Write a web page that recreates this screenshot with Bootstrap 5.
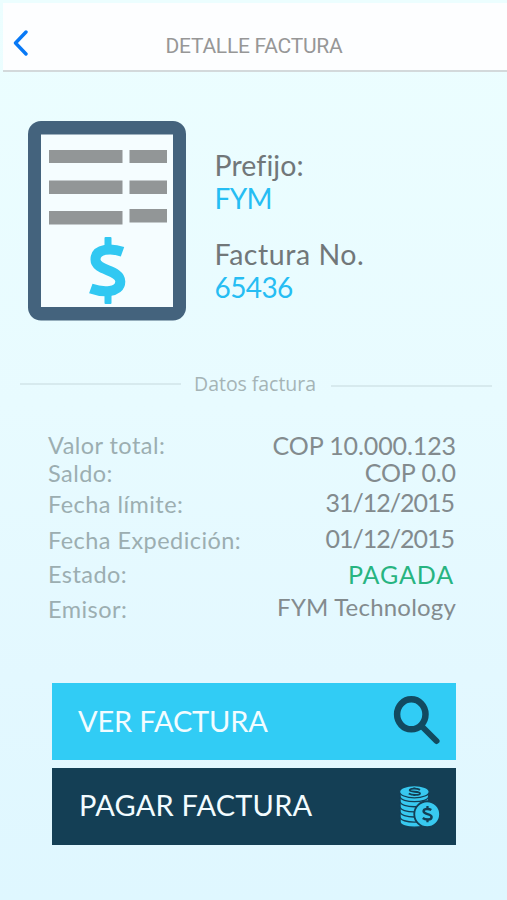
<!DOCTYPE html>
<html lang="es">
<head>
<meta charset="utf-8">
<meta name="viewport" content="width=device-width, initial-scale=1">
<title>Detalle factura</title>
<link rel="stylesheet" href="https://cdn.jsdelivr.net/npm/bootstrap@5.3.0/dist/css/bootstrap.min.css">
<style>
html{overflow:hidden}
body{width:507px;height:900px;overflow:hidden;font-family:Lato,"Open Sans",sans-serif;background:linear-gradient(#ecfeff 0,#e8fbff 45%,#e3f8ff 75%,#dff7ff 100%);white-space:nowrap}
.topbar{margin:3px 0 0 3px;height:69px;background:#fdfeff;border-bottom:2px solid #d3d9db;padding:1px 0 0 9px}
.topbar h1{font:400 21px/24px Roboto,sans-serif;letter-spacing:-.25px;color:#979797;margin:30px 0 0 136.5px}
.back{margin-top:26px}
.summary{padding:49px 0 0 28px;height:300px}
.meta{font-size:28.5px;line-height:33px;color:#717779;margin:28px 0 0 28.5px}
.meta dt,.meta dd{font-weight:400;margin:0}
.meta dt{letter-spacing:.1px}
.meta dd{color:#26bdf3;font-size:28px;letter-spacing:-.6px}
.meta dt.number{margin-top:22px;letter-spacing:.55px;line-height:34px}
.divider{height:24px;padding:0 15px 0 20px}
.divider h2{font:400 19.5px/24px "Open Sans",sans-serif;letter-spacing:-.05px;color:#a5b4b6;margin:0 15px 0 13px}
.divider .rule{height:2px;background:#d7eaee}
.details{padding:34px 51px 0 48px;height:287px;line-height:28px}
.details ul{margin:0;padding:0;list-style:none}
.labels{font-size:23.5px;letter-spacing:.45px;color:#9caeb1;grid-template-rows:28px 31px 36px 34px 35px 28px}
.labels,.values{padding-top:1px!important}
.values{font-size:25px;letter-spacing:-.1px;color:#838b8e;text-align:right;grid-template-rows:27px 30px 36px 36px 33px 28px}
.values .date{letter-spacing:-1px;padding-right:2px}
.values .paid{letter-spacing:.9px;color:#27b481;padding-right:2px}
.values .issuer{font-size:24px;letter-spacing:.2px}
.action{width:404px;height:77px;border:0;border-radius:0;margin-left:52px;padding:0 15px 1px 26px;color:#f2fcff;font-size:29px;line-height:34px}
.view,.view:hover{background:#31ccf5;letter-spacing:-.15px}
.pay,.pay:hover{background:#143f55;margin-top:8px;padding:0 16px 3px 27px;letter-spacing:.2px}
.pay svg{margin-top:3px}
</style>
</head>
<body>
<header class="topbar d-flex align-items-start">
<a href="#" class="back d-block lh-1" aria-label="Volver"><svg class="d-block" width="17" height="27" viewBox="0 0 17 27" fill="none" stroke="#0879f6" stroke-width="3.400" stroke-linecap="round" stroke-linejoin="round"><path d="M14 2 3.500 13 14 24"/></svg></a>
<h1>DETALLE FACTURA</h1>
</header>
<main>
<section class="summary d-flex align-items-start">
<svg width="158" height="200" viewBox="0 0 158 200" aria-hidden="true"><rect width="158" height="199.500" rx="13" fill="#44637d"/><path fill="#f5fdff" d="M13 13.500h132v172.500H13z"/><path fill="#929697" d="M21 29h73.500v13H21zM101.500 29H139v13h-37.500zM21 59.500h73.500V73H21zM101.500 59.500H139V73h-37.500zM21 90h73.500v13.500H21zM101.500 88H139v13.500h-37.500z"/><path d="M94.500 130.800C84 127 67.500 127 67.500 138.500C67.500 150.500 92.300 148 92.300 160.500C92.300 172.500 74 171.500 62.800 167.500" fill="none" stroke="#31c8f2" stroke-width="10"/><path d="M77.500 116h5q1 0 1 1v8h-7v-8q0-1 1-1zM76.500 171h7v11q0 1-1 1h-5q-1 0-1-1z" fill="#31c8f2"/></svg>
<dl class="meta mb-0">
<dt>Prefijo:</dt><dd>FYM</dd>
<dt class="number">Factura No.</dt><dd>65436</dd>
</dl>
</section>
<div class="divider d-flex align-items-center"><div class="rule flex-grow-1"></div><h2>Datos factura</h2><div class="rule flex-grow-1 mt-1"></div></div>
<section class="details d-flex justify-content-between align-items-start">
<ul class="labels d-grid"><li>Valor total:</li><li>Saldo:</li><li>Fecha límite:</li><li>Fecha Expedición:</li><li>Estado:</li><li>Emisor:</li></ul>
<ul class="values d-grid"><li>COP 10.000.123</li><li>COP 0.0</li><li class="date">31/12/2015</li><li class="date">01/12/2015</li><li class="paid">PAGADA</li><li class="issuer">FYM Technology</li></ul>
</section>
<button class="action view btn d-flex align-items-center justify-content-between">VER FACTURA
<svg width="48" height="50" viewBox="0 0 48 50" fill="none" stroke="#124a60" aria-hidden="true"><ellipse cx="18.300" cy="18.300" rx="14.200" ry="15" stroke-width="6.500"/><path d="m28.500 30 15 15" stroke-width="6" stroke-linecap="round"/></svg></button>
<button class="action pay btn d-flex align-items-center justify-content-between">PAGAR FACTURA
<svg width="41" height="44" viewBox="0 0 40 43" aria-hidden="true"><g fill="#38c9f0" stroke="#143f55" stroke-width="1.300"><path d="M1 31v5c0 7 28 7 28 0v-5z"/><path d="M1 26v5c0 7 28 7 28 0v-5z"/><path d="M1 21v5c0 7 28 7 28 0v-5z"/><path d="M1 16v5c0 7 28 7 28 0v-5z"/><path d="M1 11v5c0 7 28 7 28 0v-5z"/><path d="M1 6v5c0 7 28 7 28 0V6z"/><ellipse cx="15" cy="6.500" rx="14.500" ry="6"/><circle cx="27.500" cy="28.500" r="12.600" stroke-width="1.800"/></g><g fill="none" stroke="#143f55"><path d="M20.500 4.800c-3-1.800-10-1.600-10 .3 0 2.200 10 .6 10 3.100 0 2-8 1.900-11 .1" stroke-width="1.900"/><path d="M15 2.500v1.300M15 9v1.700" stroke-width="2"/><path d="M31.500 24.500c-2.500-1.700-7.500-1.500-7.500 1.200 0 3.400 7.800 2.100 7.800 5.600 0 3.100-5.800 3.100-8.600 1" stroke-width="2.400"/><path d="M27.800 20.500v3M27.800 33v3.500" stroke-width="2.200"/></g></svg></button>
</main>
<script src="https://cdn.jsdelivr.net/npm/bootstrap@5.3.0/dist/js/bootstrap.bundle.min.js"></script>
</body>
</html>
